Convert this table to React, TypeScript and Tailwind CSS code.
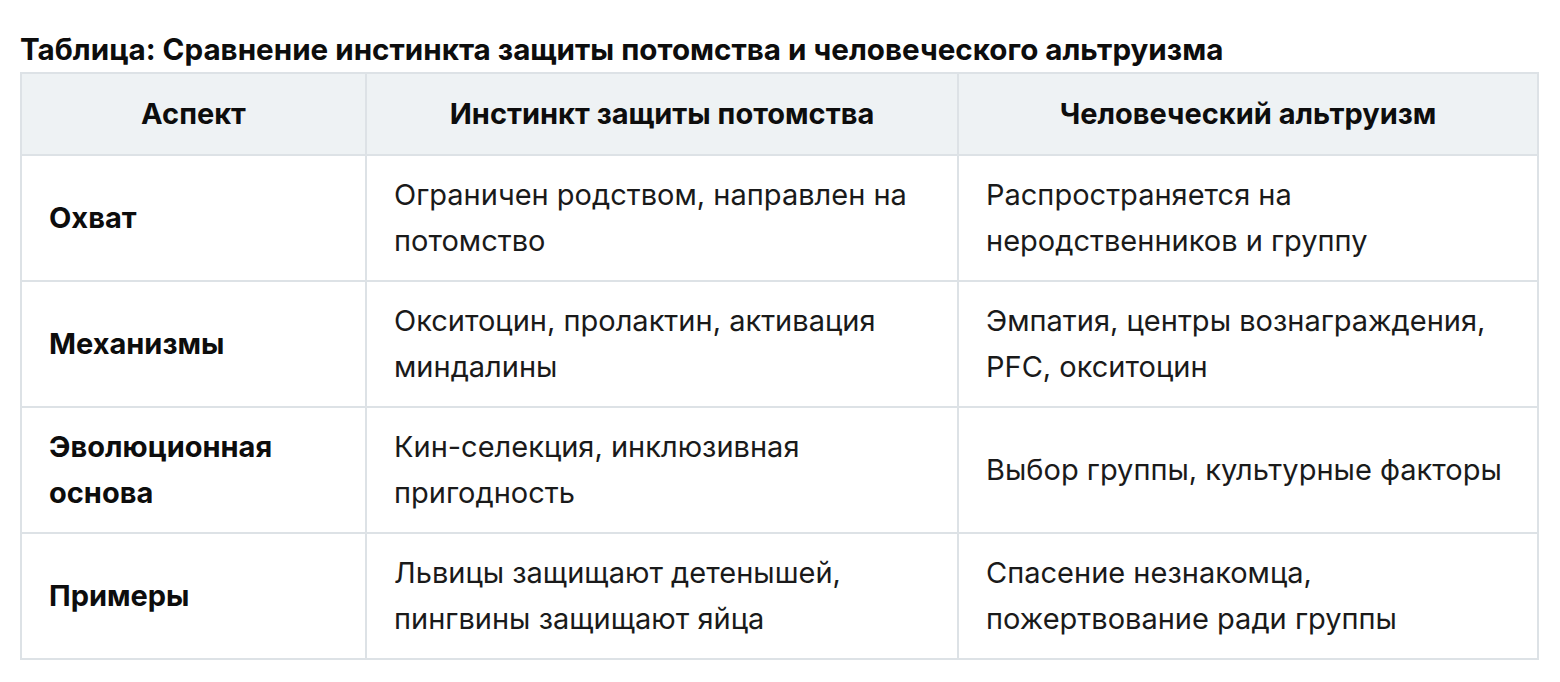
const rows = [
  {
    aspect: "Охват",
    instinct: "Ограничен родством, направлен на потомство",
    altruism: "Распространяется на неродственников и группу",
  },
  {
    aspect: "Механизмы",
    instinct: "Окситоцин, пролактин, активация миндалины",
    altruism: "Эмпатия, центры вознаграждения, PFC, окситоцин",
  },
  {
    aspect: "Эволюционная основа",
    instinct: "Кин-селекция, инклюзивная пригодность",
    altruism: "Выбор группы, культурные факторы",
  },
  {
    aspect: "Примеры",
    instinct: "Львицы защищают детенышей, пингвины защищают яйца",
    altruism: "Спасение незнакомца, пожертвование ради группы",
  },
];

export default function App() {
  return (
    <div className="min-h-screen bg-white px-[20px] pt-[32px] font-['Inter','Noto_Sans',sans-serif] text-[#1a1a1a]">
      <h3 className="mb-[6px] text-[29.6px] font-bold leading-[34px] text-[#0d0d0d]">
        Таблица: Сравнение инстинкта защиты потомства и человеческого альтруизма
      </h3>
      <table className="w-[1517px] table-fixed border-collapse text-[29px] leading-[46px]">
        <colgroup>
          <col className="w-[345px]" />
          <col className="w-[592px]" />
          <col className="w-[580px]" />
        </colgroup>
        <thead>
          <tr className="bg-[#eef2f4]">
            <th className="border-2 border-[#dde2e6] px-[27px] py-[17px] text-center font-bold text-[#0d0d0d]">Аспект</th>
            <th className="border-2 border-[#dde2e6] px-[27px] py-[17px] text-center font-bold text-[#0d0d0d]">
              Инстинкт защиты потомства
            </th>
            <th className="border-2 border-[#dde2e6] px-[27px] py-[17px] text-center font-bold text-[#0d0d0d]">
              Человеческий альтруизм
            </th>
          </tr>
        </thead>
        <tbody>
          {rows.map((row) => (
            <tr key={row.aspect}>
              <td className="border-2 border-[#dde2e6] px-[27px] py-[16px] align-middle font-bold text-[#0d0d0d]">
                {row.aspect}
              </td>
              <td className="border-2 border-[#dde2e6] px-[27px] py-[16px] align-middle">{row.instinct}</td>
              <td className="border-2 border-[#dde2e6] px-[27px] py-[16px] align-middle">{row.altruism}</td>
            </tr>
          ))}
        </tbody>
      </table>
    </div>
  );
}
